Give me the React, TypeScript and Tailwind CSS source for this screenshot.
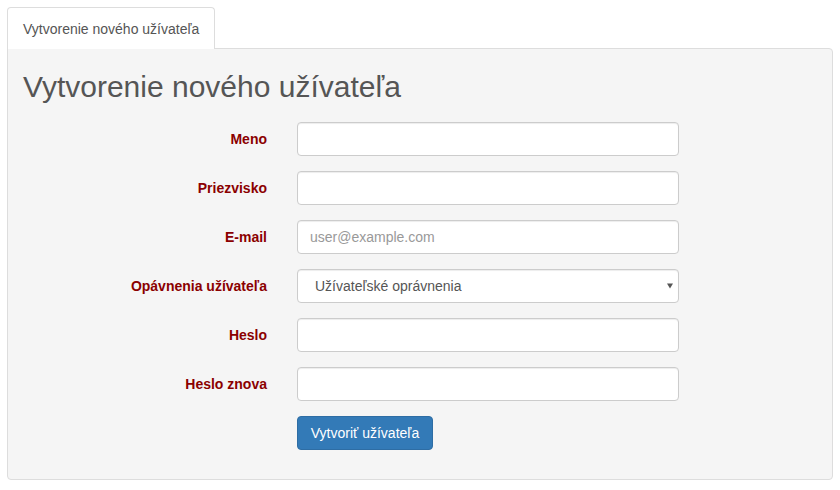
import React from "react";

const font = { fontFamily: '"Liberation Sans", Arial, sans-serif' };

const labelCls =
  "w-[244px] shrink-0 text-right text-[14px] font-bold leading-[20px] text-[#8b0000]";
const inputCls =
  "w-[382px] h-[34px] rounded-[4px] border border-[#cccccc] bg-white px-[12px] text-[14px] text-[#555555] shadow-[inset_0_1px_1px_rgba(0,0,0,0.075)] outline-none placeholder:text-[#999999]";

function Row({ label, children }: { label: string; children: React.ReactNode }) {
  return (
    <div className="flex items-center gap-[30px] mb-[15px]">
      <label className={labelCls}>{label}</label>
      {children}
    </div>
  );
}

export default function App() {
  return (
    <div className="w-[840px] h-[490px] bg-white pt-[7px] pl-[7px] pr-[7px]" style={font}>
      <div className="flex">
        <div className="relative z-10 -mb-px h-[42px] rounded-t-[4px] border border-b-0 border-[#dddddd] bg-white px-[15px] pt-[11px] text-[14px] leading-[20px] text-[#555555]">
          Vytvorenie nového užívateľa
        </div>
      </div>
      <div className="w-[826px] rounded-b-[4px] rounded-tr-[4px] border border-[#dddddd] bg-[#f5f5f5] px-[15px] pt-[21px] pb-[14px]">
        <h2 className="text-[30px] leading-[33px] font-normal text-[#555555] mb-[19px]">
          Vytvorenie nového užívateľa
        </h2>
        <Row label="Meno">
          <input className={inputCls} />
        </Row>
        <Row label="Priezvisko">
          <input className={inputCls} />
        </Row>
        <Row label="E-mail">
          <input className={inputCls} placeholder="user@example.com" />
        </Row>
        <Row label="Opávnenia užívateľa">
          <div className="relative">
            <select className={inputCls + " appearance-none pl-[17px]"} defaultValue="u">
              <option value="u">Užívateľské oprávnenia</option>
            </select>
            <svg
              className="pointer-events-none absolute right-[6px] top-[14px]"
              width="6"
              height="6"
              viewBox="0 0 6 6"
            >
              <path d="M0 0.5 L6 0.5 L3 5.5 Z" fill="#555555" />
            </svg>
          </div>
        </Row>
        <Row label="Heslo">
          <input className={inputCls} type="password" />
        </Row>
        <Row label="Heslo znova">
          <input className={inputCls} type="password" />
        </Row>
        <div className="flex mb-[15px]">
          <div className="w-[274px] shrink-0" />
          <button className="h-[34px] w-[136px] rounded-[4px] border border-[#2e6da4] bg-[#337ab7] text-[14px] leading-[20px] text-white">
            Vytvoriť užívateľa
          </button>
        </div>
      </div>
    </div>
  );
}
